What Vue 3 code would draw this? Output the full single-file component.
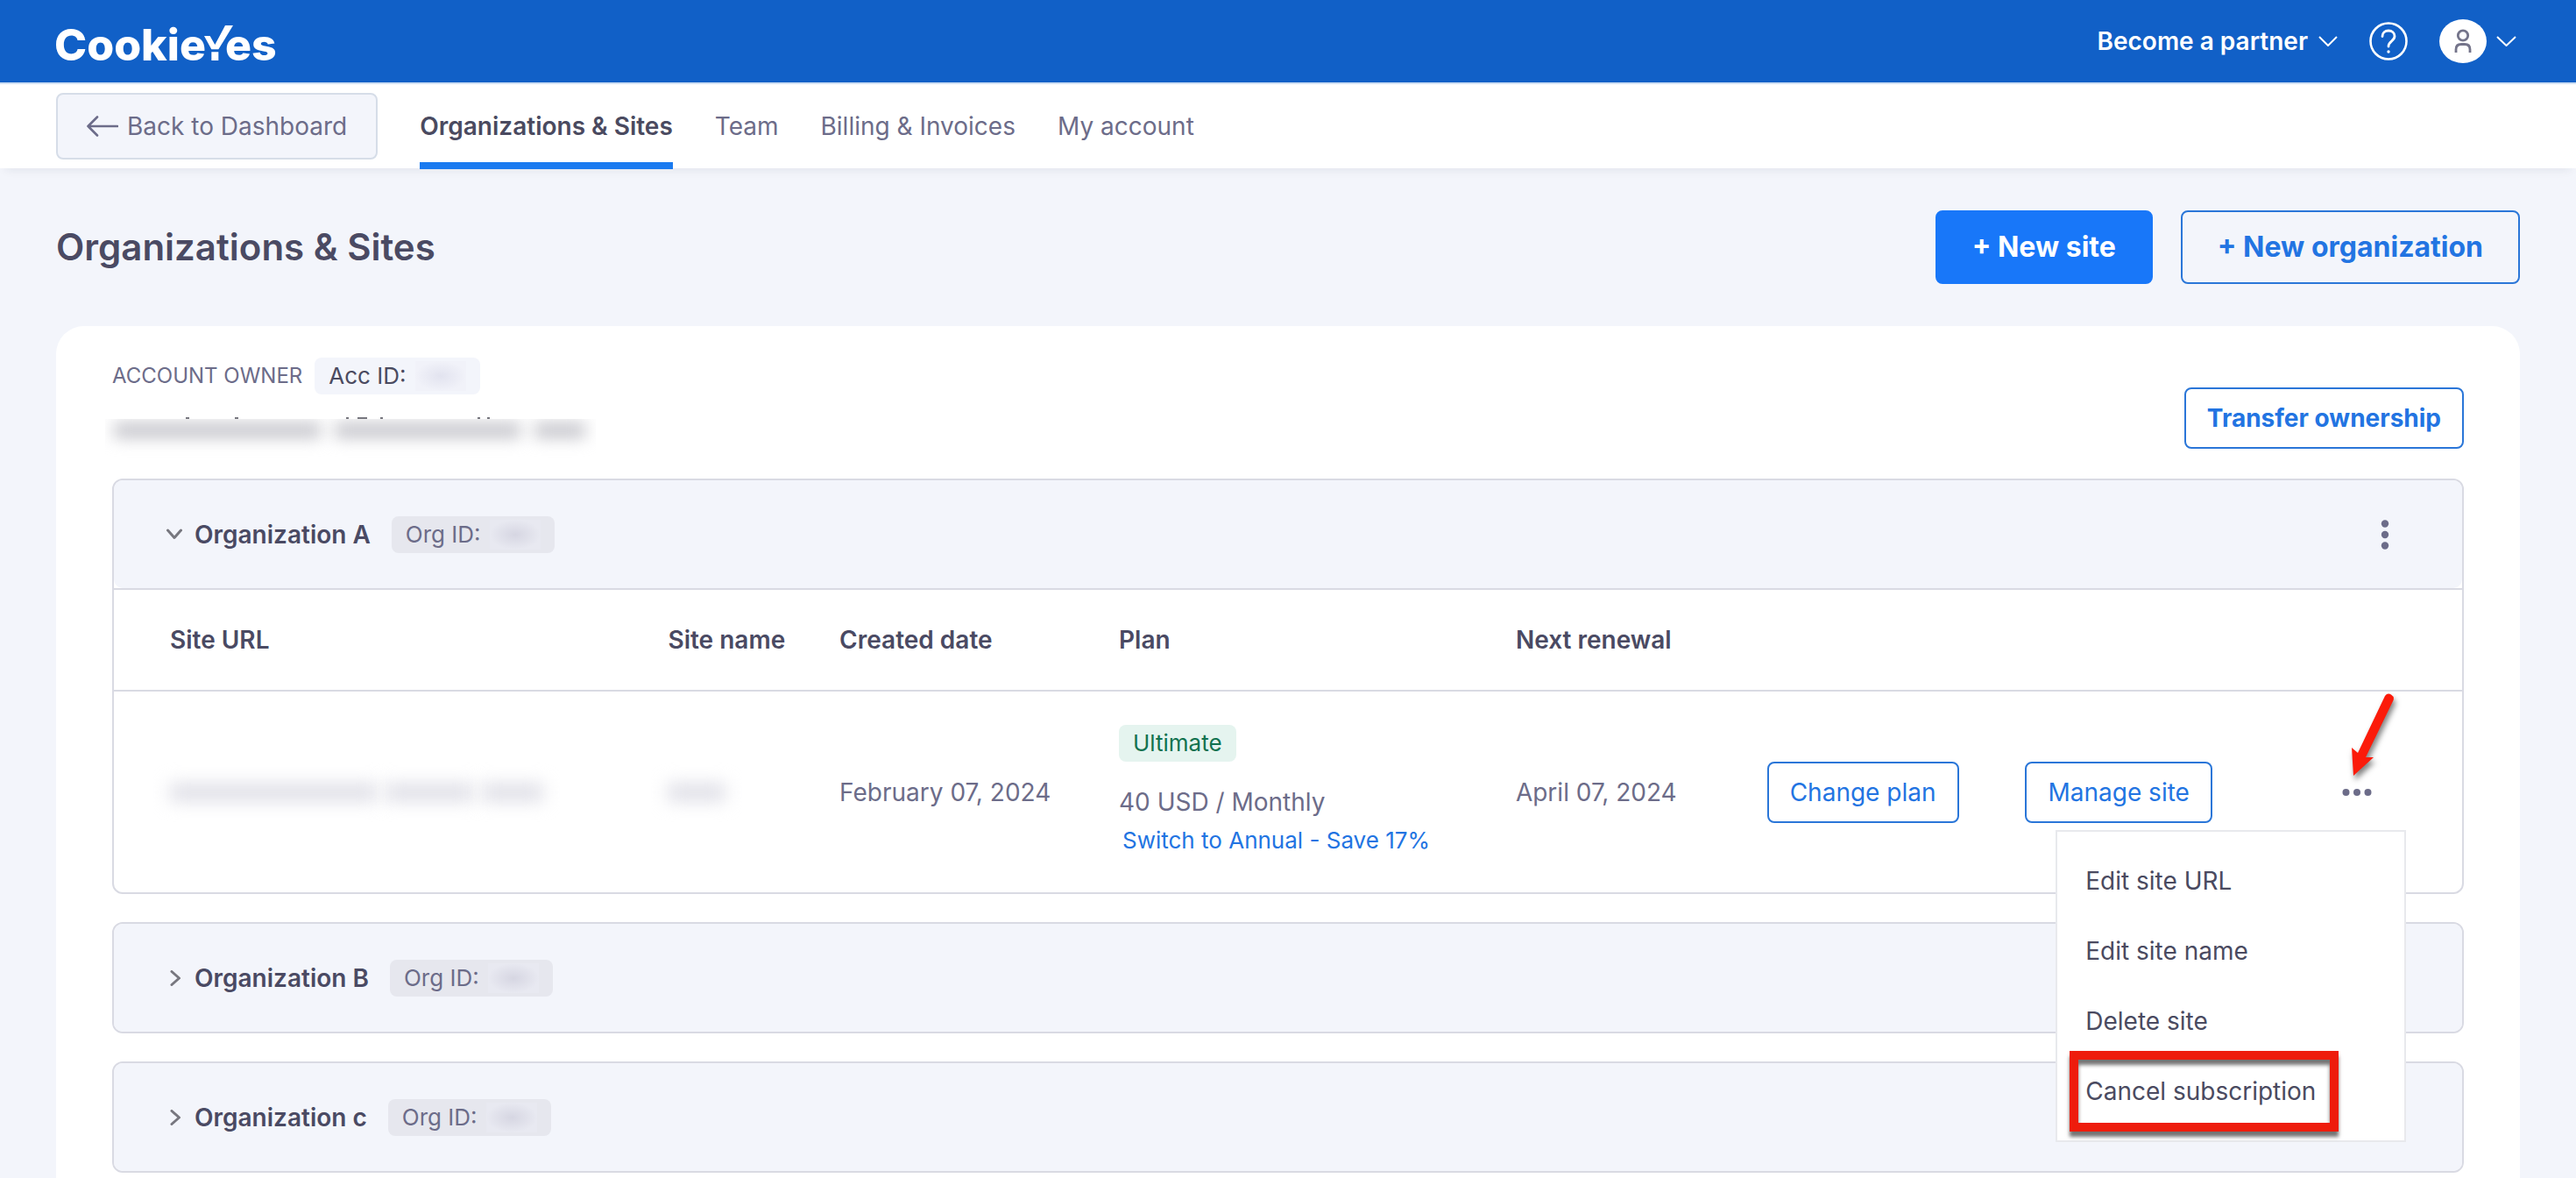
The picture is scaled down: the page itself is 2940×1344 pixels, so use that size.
<script setup>
import { ref } from 'vue'

const tabs = [
  { label: 'Organizations & Sites', active: true },
  { label: 'Team' },
  { label: 'Billing & Invoices' },
  { label: 'My account' },
]

const columns = ['Site URL', 'Site name', 'Created date', 'Plan', 'Next renewal']

const organizations = ref([
  { name: 'Organization A', open: true },
  { name: 'Organization B', open: false },
  { name: 'Organization c', open: false },
])

const siteActions = [
  { label: 'Edit site URL' },
  { label: 'Edit site name' },
  { label: 'Delete site' },
  { label: 'Cancel subscription', marked: true },
]
</script>

<template>
  <div class="page">
    <header class="topbar">
      <a class="logo" href="#" aria-label="CookieYes">
        <span>Cookie</span>
        <svg class="logo-check" width="33" height="40" viewBox="0 0 99 120" aria-hidden="true">
          <path d="M0 36h20l17 30L72 0h27L49 82H25z M25 91h24v29H25z" fill="#fff" />
        </svg>
        <span>es</span>
      </a>
      <div class="top-actions">
        <button class="plain partner" type="button">
          Become a partner
          <svg width="22" height="12" viewBox="0 0 22 12" fill="none" stroke="#fff" stroke-width="2"><path d="M1 1l10 10L21 1" /></svg>
        </button>
        <button class="plain help" type="button" aria-label="Help">
          <svg width="44" height="44" viewBox="0 0 44 44" fill="none" stroke="#fff" stroke-linecap="round">
            <circle cx="22" cy="22" r="20.5" stroke-width="2.6" />
            <path d="M15 16.500c0-4 3-6.500 7-6.500s7 2.600 7 6.300c0 5.700-7 5.500-7 11.700" stroke-width="2.800" />
            <circle cx="22" cy="34" r="1.700" fill="#fff" stroke="none" />
          </svg>
        </button>
        <button class="plain account" type="button" aria-label="Account menu">
          <svg width="54" height="50" viewBox="0 0 54 50" fill="none">
            <ellipse cx="27" cy="25" rx="27" ry="25" fill="#fff" />
            <circle cx="27" cy="18.500" r="5.700" stroke="#74748a" stroke-width="2.800" />
            <path d="M19 38v-3.500c0-4 2.500-6 6-6h4c3.500 0 6 2 6 6V38" stroke="#74748a" stroke-width="2.800" />
          </svg>
          <svg width="23" height="12" viewBox="0 0 23 12" fill="none" stroke="#fff" stroke-width="2"><path d="M1 1l10.500 10L22 1" /></svg>
        </button>
      </div>
    </header>

    <nav class="tabs">
      <a class="back" href="#">
        <svg width="36" height="24" viewBox="0 0 36 24" fill="none" stroke="#6c6c89" stroke-width="2.600" stroke-linecap="round" stroke-linejoin="round">
          <path d="M12 1.500L1.500 12 12 22.500M1.500 12H35" />
        </svg>
        Back to Dashboard
      </a>
      <a v-for="tab in tabs" :key="tab.label" class="tab" :class="{ active: tab.active }" href="#">{{ tab.label }}</a>
    </nav>

    <main>
      <div class="title-row">
        <h1>Organizations &amp; Sites</h1>
        <button class="btn large filled" type="button">+ New site</button>
        <button class="btn large" type="button">+ New organization</button>
      </div>

      <section class="panel">
        <div class="owner-row">
          <div class="owner">
            <div class="owner-line">
              <span class="owner-label">ACCOUNT OWNER</span>
              <span class="badge light">Acc ID: <i class="smudge"></i></span>
            </div>
            <div class="owner-email">
              <svg class="tips" width="550" height="2" viewBox="0 0 550 2" fill="#77777f">
                <path d="M92 0h4v2h-4zM148 0h4v2h-4zM275 0h3v2h-3zM288 0h11v2h-11zM314 0h3v2h-3zM425 0h3v2h-3zM436 0h3v2h-3z" />
              </svg>
              <div class="email-blur"><i></i><i></i><i></i></div>
            </div>
          </div>
          <button class="btn bold" type="button">Transfer ownership</button>
        </div>

        <article v-for="org in organizations" :key="org.name" class="org">
          <div class="org-head">
            <button class="plain org-toggle" type="button" :aria-expanded="org.open" @click="org.open = !org.open">
              <svg v-if="org.open" width="18" height="18" viewBox="0 0 18 18" fill="none" stroke="#77777f" stroke-width="3" stroke-linecap="round" stroke-linejoin="round"><path d="M1.500 4L9 12.500 16.500 4" /></svg>
              <svg v-else width="18" height="18" viewBox="0 0 18 18" fill="none" stroke="#77777f" stroke-width="3" stroke-linecap="round" stroke-linejoin="round"><path d="M6 1.500L14.500 9 6 16.500" /></svg>
              {{ org.name }}
            </button>
            <span class="badge">Org ID: <i class="smudge"></i></span>
            <button v-if="org.open" class="plain org-menu" type="button" aria-label="Organization menu">
              <svg width="10" height="34" viewBox="0 0 10 34" fill="#6c6c89"><circle cx="5" cy="4.500" r="4.200" /><circle cx="5" cy="17" r="4.200" /><circle cx="5" cy="29.500" r="4.200" /></svg>
            </button>
          </div>

          <table v-if="org.open">
            <colgroup>
              <col class="c-url" /><col class="c-name" /><col class="c-date" /><col class="c-plan" />
              <col class="c-renewal" /><col class="c-change" /><col class="c-manage" /><col />
            </colgroup>
            <thead>
              <tr>
                <th v-for="column in columns" :key="column" scope="col">{{ column }}</th>
                <td colspan="3"></td>
              </tr>
            </thead>
            <tbody>
              <tr>
                <td><div class="cell-blur"><i class="w1"></i><i class="w2"></i><i class="w3"></i></div></td>
                <td><div class="cell-blur"><i class="w4"></i></div></td>
                <td>February 07, 2024</td>
                <td>
                  <div class="plan">
                    <span class="badge green">Ultimate</span>
                    <span class="price">40 USD / Monthly</span>
                    <a class="switch" href="#">Switch to Annual - Save 17%</a>
                  </div>
                </td>
                <td>April 07, 2024</td>
                <td><button class="btn" type="button">Change plan</button></td>
                <td><button class="btn" type="button">Manage site</button></td>
                <td>
                  <div class="more">
                    <button class="plain more-button" type="button" aria-label="Site actions">
                      <svg width="34" height="34" viewBox="0 0 34 34" fill="#6c6c89"><circle cx="4.500" cy="17" r="4" /><circle cx="17" cy="17" r="4" /><circle cx="29.500" cy="17" r="4" /></svg>
                    </button>
                    <svg class="arrow" width="64" height="110" viewBox="0 0 64 110">
                      <path d="M10 98L8 66l7 6L46 7q3-4 7-1.500t2.500 6.500L24 77l9 0z" fill="#fb1b0a" />
                    </svg>
                    <ul class="menu">
                      <li v-for="action in siteActions" :key="action.label">
                        <button class="plain menu-item" :class="{ marked: action.marked }" type="button">{{ action.label }}</button>
                      </li>
                    </ul>
                  </div>
                </td>
              </tr>
            </tbody>
          </table>
        </article>
      </section>
    </main>
  </div>
</template>

<style>
body {
  margin: 0;
  background: #f3f5fb;
}
</style>

<style scoped>
* {
  box-sizing: border-box;
}

.page {
  min-height: 100vh;
  display: flex;
  flex-direction: column;
  background: #f3f5fb;
  color: #6c6c89;
  font-family: Inter, "Liberation Sans", sans-serif;
  font-size: 28px;
  line-height: 36px;
}

svg {
  display: block;
  flex: none;
}

a {
  color: inherit;
  text-decoration: none;
}

.plain {
  border: 0;
  padding: 0;
  background: none;
  color: inherit;
  font: inherit;
  text-align: left;
  cursor: pointer;
}

.topbar {
  display: flex;
  align-items: center;
  justify-content: space-between;
  height: 96px;
  padding: 0 68px 0 62px;
  background: #1160c7;
  border-bottom: 2px solid #cfdff4;
  color: #fff;
}

.logo {
  display: flex;
  align-items: flex-end;
  margin-top: 8px;
  font-size: 50px;
  font-weight: 800;
  line-height: 60px;
}

.logo-check {
  margin: 0 -9px 12px -2px;
}

.top-actions {
  display: flex;
  align-items: center;
  gap: 36px;
}

.partner {
  display: flex;
  align-items: center;
  gap: 12px;
  font-weight: 600;
}

.account {
  display: flex;
  align-items: center;
  gap: 11px;
}

.tabs {
  display: flex;
  align-items: center;
  gap: 48px;
  height: 96px;
  padding: 0 64px;
  background: #fff;
  box-shadow: 0 8px 10px -6px rgba(30, 40, 60, 0.08);
}

.back {
  display: flex;
  align-items: center;
  gap: 10px;
  height: 76px;
  padding: 0 33px;
  border: 2px solid #d6dde8;
  border-radius: 8px;
  background: #f3f5fb;
}

.tab {
  height: 97px;
  padding-top: 30px;
}

.tab.active {
  border-bottom: 8px solid #1a7af0;
  color: #4a4a60;
  font-weight: 600;
}

main {
  flex: 1;
  display: flex;
  flex-direction: column;
  padding: 48px 64px 0;
}

.title-row {
  display: flex;
  align-items: center;
  gap: 32px;
}

h1 {
  margin: 0 auto 0 0;
  color: #4a4a63;
  font-size: 42px;
  font-weight: 600;
  line-height: 48px;
}

.btn {
  padding: 15px 24px;
  border: 2px solid #2a76d8;
  border-radius: 8px;
  background: transparent;
  color: #2274e2;
  font: inherit;
  white-space: nowrap;
  cursor: pointer;
}

.btn.bold {
  font-weight: 700;
}

.btn.large {
  padding: 22px 40px;
  font-size: 32px;
  font-weight: 700;
}

.btn.filled {
  border-color: #1877f9;
  background: #1877f9;
  color: #fff;
}

.panel {
  flex: 1;
  display: flex;
  flex-direction: column;
  gap: 32px;
  margin-top: 48px;
  padding: 36px 64px 6px;
  border-radius: 32px 32px 0 0;
  background: #fff;
}

.owner-row {
  display: flex;
  align-items: flex-end;
  justify-content: space-between;
  padding-bottom: 2px;
}

.owner-line {
  display: flex;
  align-items: center;
  gap: 14px;
}

.owner-label {
  font-size: 24px;
}

.owner-email {
  margin: 26px 0 0 -8px;
  height: 36px;
}

.email-blur {
  display: flex;
  gap: 16px;
  width: 560px;
  height: 52px;
  padding: 4px 10px;
  overflow: hidden;
}

.email-blur i {
  width: 236px;
  height: 18px;
  background: #c6c6cc;
  filter: blur(9px);
}

.email-blur i:nth-child(2) {
  width: 212px;
}

.email-blur i:nth-child(3) {
  width: 58px;
}

.badge {
  display: flex;
  align-items: center;
  gap: 10px;
  height: 42px;
  padding: 0 16px;
  border-radius: 8px;
  background: #e6e7ee;
  font-size: 26px;
}

.badge.light {
  background: #f3f5fb;
  color: #4a4a60;
}

.badge.green {
  background: #e5f4ef;
  color: #12724f;
}

.smudge {
  width: 58px;
  height: 34px;
  background: radial-gradient(closest-side, #d6d6e2, #e8e9f1);
}

.light .smudge {
  background: radial-gradient(closest-side, #e2e3ef, #f1f2f9);
}

.org {
  border: 2px solid #d9dae3;
  border-radius: 12px;
}

.org-head {
  display: flex;
  align-items: center;
  gap: 24px;
  height: 123px;
  padding: 0 83px 0 60px;
  border-radius: 10px;
  background: #f3f5fb;
}

.org-toggle {
  display: flex;
  align-items: center;
  gap: 14px;
  color: #4a4a63;
  font-weight: 600;
}

.org-menu {
  margin-left: auto;
}

table {
  width: 100%;
  table-layout: fixed;
  border-collapse: collapse;
}

.c-url { width: 23.6%; }
.c-name { width: 7.3%; }
.c-date { width: 11.9%; }
.c-plan { width: 16.9%; }
.c-renewal { width: 10.7%; }
.c-change { width: 11%; }
.c-manage { width: 13.5%; }

th,
td {
  padding: 0;
  border-top: 2px solid #d9dae3;
  text-align: left;
  white-space: nowrap;
}

th:first-child,
td:first-child {
  padding-left: 64px;
}

th {
  height: 116px;
  color: #4a4a63;
  font-weight: 600;
}

tbody td {
  height: 230px;
}

.plan {
  display: flex;
  flex-direction: column;
  align-items: flex-start;
  padding-bottom: 4px;
}

.price {
  margin-top: 28px;
}

.switch {
  margin-top: 8px;
  padding-left: 4px;
  color: #2274e2;
  font-size: 26px;
}

.cell-blur {
  display: flex;
  gap: 10px;
}

.cell-blur i {
  height: 20px;
  background: #dedee6;
  filter: blur(10px);
}

.cell-blur .w1 { width: 236px; }
.cell-blur .w2 { width: 100px; }
.cell-blur .w3 { width: 70px; }
.cell-blur .w4 { width: 66px; }

.more {
  position: relative;
  width: 34px;
  height: 34px;
}

.arrow {
  position: absolute;
  top: -100px;
  left: 3px;
  filter: drop-shadow(2px 5px 3px rgba(0, 0, 0, 0.5));
}

.menu {
  position: absolute;
  z-index: 2;
  top: 60px;
  right: -39px;
  width: 400px;
  margin: 0;
  padding: 16px;
  border: 2px solid #e8e9ed;
  background: #fff;
  list-style: none;
}

.menu li {
  display: flex;
  align-items: center;
  height: 80px;
}

.menu-item {
  padding-left: 16px;
  color: #4a4a60;
}

.menu-item.marked {
  position: relative;
}

.menu-item.marked::after {
  content: "";
  position: absolute;
  inset: -28px -26px -28px -2px;
  border: 10px solid #ee1c0c;
  box-shadow: 0 6px 4px rgba(0, 0, 0, 0.55), inset 0 6px 4px rgba(0, 0, 0, 0.55);
}
</style>
